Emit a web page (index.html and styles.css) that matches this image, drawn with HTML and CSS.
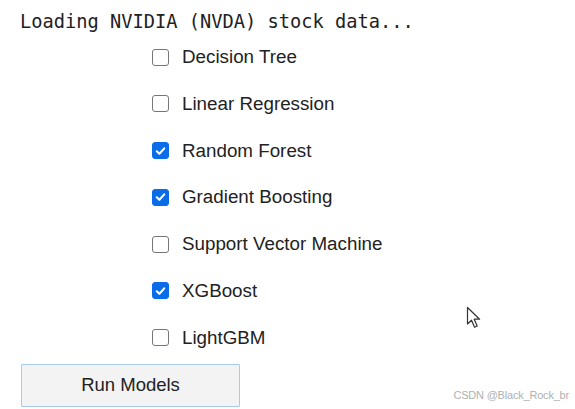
FILE: index.html
```html
<!DOCTYPE html>
<html>
<head>
<meta charset="utf-8">
<link rel="stylesheet" href="styles.css">
</head>
<body>
<div class="page">
  <div class="status">Loading NVIDIA (NVDA) stock data...</div>
  <div class="models">
    <label class="model"><span class="box"></span><span>Decision Tree</span></label>
    <label class="model"><span class="box"></span><span>Linear Regression</span></label>
    <label class="model"><span class="box checked"><svg viewBox="0 0 16 16" width="16" height="16"><path d="M4 8.3 L6.8 11 L12 5.2" fill="none" stroke="#fff" stroke-width="2.2" stroke-linecap="round" stroke-linejoin="round"/></svg></span><span>Random Forest</span></label>
    <label class="model"><span class="box checked"><svg viewBox="0 0 16 16" width="16" height="16"><path d="M4 8.3 L6.8 11 L12 5.2" fill="none" stroke="#fff" stroke-width="2.2" stroke-linecap="round" stroke-linejoin="round"/></svg></span><span>Gradient Boosting</span></label>
    <label class="model"><span class="box"></span><span>Support Vector Machine</span></label>
    <label class="model"><span class="box checked"><svg viewBox="0 0 16 16" width="16" height="16"><path d="M4 8.3 L6.8 11 L12 5.2" fill="none" stroke="#fff" stroke-width="2.2" stroke-linecap="round" stroke-linejoin="round"/></svg></span><span>XGBoost</span></label>
    <label class="model"><span class="box"></span><span>LightGBM</span></label>
  </div>
  <button class="run">Run Models</button>
</div>
<svg class="cursor" viewBox="0 0 16 24" width="16" height="24"><path d="M1.5 1.5 L1.5 18 L5.5 14.2 L8.6 21.2 L11.2 20 L8.2 13.2 L13.6 13.2 Z" fill="#fff" stroke="#333" stroke-width="1.2" stroke-linejoin="round"/></svg>
<div class="watermark">CSDN @Black_Rock_br</div>
</body>
</html>
```
FILE: styles.css
```css
html, body {
  margin: 0;
  padding: 0;
  background: #fff;
}
body {
  width: 575px;
  height: 409px;
  overflow: hidden;
  position: relative;
  font-family: "Liberation Sans", Arial, sans-serif;
  color: #222;
}
.page {
  padding: 11px 0 0 20px;
  display: flex;
  flex-direction: column;
}
.status {
  font-family: "DejaVu Sans Mono", "Liberation Mono", monospace;
  font-size: 18.7px;
  line-height: 22px;
  color: #222;
}
.models {
  display: flex;
  flex-direction: column;
  gap: 24.8px;
  padding-left: 132px;
  margin-top: 13px;
}
.model {
  display: flex;
  align-items: center;
  gap: 13px;
  height: 22px;
  font-size: 18.8px;
  color: #222;
}
.box {
  width: 15px;
  height: 15px;
  border: 1.5px solid #767676;
  border-radius: 3px;
  background: #fff;
  display: flex;
  align-items: center;
  justify-content: center;
  flex-shrink: 0;
}
.box.checked {
  background: #0a6ce8;
  border-color: #0a6ce8;
}
.box svg {
  display: block;
}
.run {
  margin-top: 15px;
  margin-left: 1px;
  width: 219px;
  height: 43px;
  background: #f3f3f3;
  border: 1.5px solid #a8cbec;
  border-radius: 1px;
  font-family: "Liberation Sans", Arial, sans-serif;
  font-size: 18.5px;
  color: #222;
  padding: 0;
}
.cursor {
  position: absolute;
  left: 466px;
  top: 306px;
}
.watermark {
  position: absolute;
  right: 6px;
  top: 389px;
  font-size: 11px;
  color: #b0b0b0;
  letter-spacing: -0.2px;
}
```
